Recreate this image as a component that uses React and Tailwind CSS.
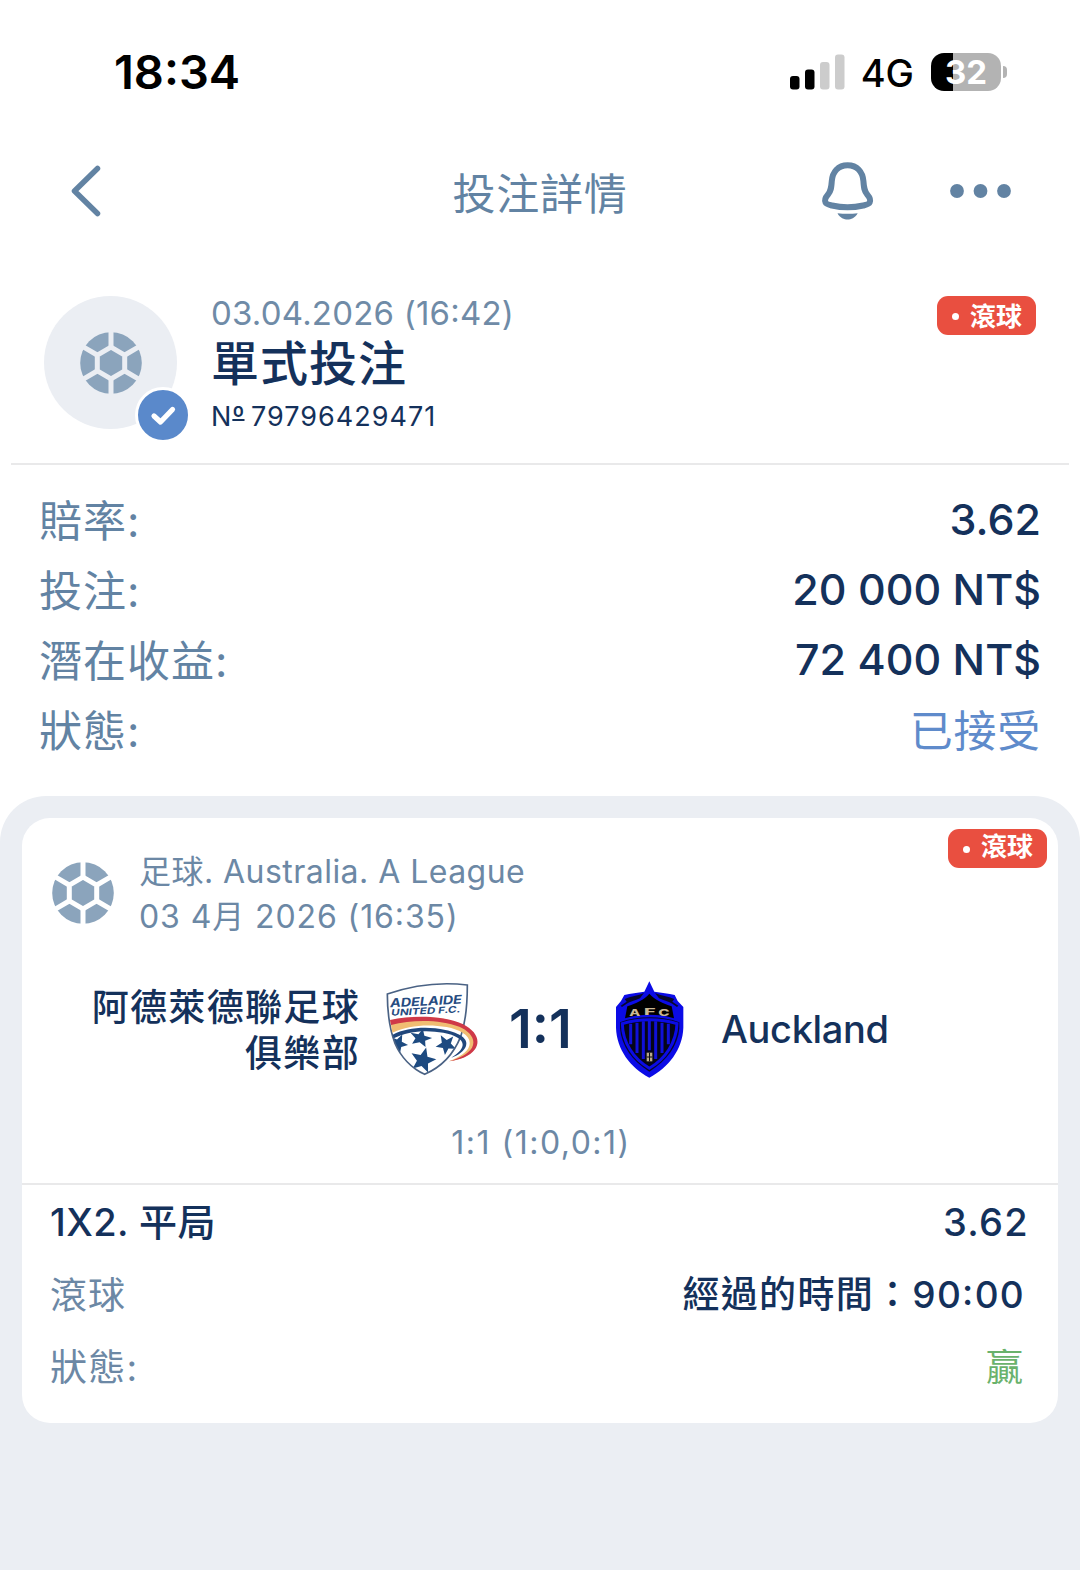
const BallIcon = ({ gap }) => (
  <svg width="62" height="62" viewBox="0 0 62 62" className="shrink-0">
    <circle cx="31" cy="31" r="30.8" fill="#8ba4bc" />
    <g fill="none" stroke={gap} strokeWidth="5">
      <path d="M31 15.2 44.7 23.1V38.9L31 46.8 17.3 38.9V23.1Z" />
      <path d="M31 16V-1M31 46V63M44 23.5 60 14.2M44 38.5 60 47.8M18 23.5 2 14.2M18 38.5 2 47.8" />
    </g>
  </svg>
);

const BellIcon = () => (
  <svg width="56" height="62" viewBox="0 0 56 62" fill="none">
    <path
      d="M27.6 5.2C18 5.2 12.5 12 11.8 21C11.3 28 11 31 8 34.5C5 38 4.5 40.5 5.5 42.5C6.5 44.5 9 44.8 12 45.5C22 47.8 33 47.8 43.2 45.5C46.2 44.8 48.7 44.5 49.7 42.5C50.7 40.5 50.2 38 47.2 34.5C44.2 31 43.9 28 43.4 21C42.7 12 37.2 5.2 27.6 5.2Z"
      stroke="#6283a3"
      strokeWidth="6"
    />
    <path d="M17.5 53.2Q27.6 54.4 37.7 53.2C35 58 31 59.500 27.6 59.500S20 58 17.5 53.2Z" fill="#6283a3" />
  </svg>
);

const SHIELD = 'M22 57C95 32 180 20 262 30C262 90 256 145 242 185C220 240 180 278 134 298C95 280 62 245 45 205C28 160 22 110 22 57Z';
const STAR = 'M0-30 8-10 29-9 13 5 18 25 0 14-18 25-13 5-29-9-8-10Z';

const AdelaideLogo = () => (
  <svg width="110" height="110" viewBox="0 0 330 330" className="mt-1 shrink-0">
    <defs>
      <clipPath id="adelaide">
        <path d={SHIELD} />
      </clipPath>
    </defs>
    <path d={SHIELD} fill="#fff" />
    <g clipPath="url(#adelaide)" fill="#1d4a80">
      <path d={STAR} transform="translate(54 206) rotate(25)" />
      <path d={STAR} transform="translate(122 189) rotate(14) scale(1.15 .92)" />
      <path d={STAR} transform="translate(198 208) rotate(-30) scale(1.05)" />
      <path d={STAR} transform="translate(129 255) rotate(14) scale(1.32 1.3)" />
    </g>
    <path d={SHIELD} fill="none" stroke="#4a6284" strokeWidth="5" />
    <path d="M31 137C100 120 190 122 246 149C285 168 301 196 283 222C268 243 240 254 207 259C238 246 262 232 268 212C276 184 242 164 200 156C140 146 85 152 37 173Z" fill="#f0bd72" />
    <path d="M30 135C100 120 190 121 248 147C290 168 302 198 285 223C269 244 240 255 207 259C240 249 264 237 276 218C289 193 270 169 238 155C182 134 100 132 33 150Z" fill="#cf3948" />
    <path d="M38 179C80 158 140 153 196 165C240 174 266 192 258 213C252 229 234 242 214 248C230 237 246 226 248 210C249 193 226 180 190 173C138 164 83 168 41 190Z" fill="#20477c" />
    <g fill="#264b80" fontFamily="Inter, sans-serif" fontStyle="italic" fontWeight="700" transform="rotate(-3 140 100)">
      <text x="31" y="91" fontSize="36" textLength="216" lengthAdjust="spacingAndGlyphs">ADELAIDE</text>
      <text x="33" y="117" fontSize="27" textLength="208" lengthAdjust="spacingAndGlyphs">UNITED F.C.</text>
    </g>
  </svg>
);

const AucklandLogo = () => (
  <svg width="100" height="115" viewBox="0 0 300 345" className="shrink-0">
    <path d="M148 31 163 62C185 66 205 66 224 72L233 90 250 108V170C248 235 205 290 148 320C91 290 50 235 48 170V108L63 90 73 72C92 66 112 66 133 62Z" fill="#0b0be6" />
    <path d="M74 84C92 76 115 74 132 66L120 82C105 88 90 92 80 98L66 108 62 104 80 92ZM223 84C205 76 182 74 165 66L177 82C192 88 207 92 217 98L231 108 235 104 217 92Z" fill="#07072c" />
    <path d="M82 106C108 96 132 88 148 68C165 88 189 96 215 106L222 142C178 128 120 128 75 142Z" fill="#000" />
    <path d="M60 154C110 134 186 134 238 154V172C234 224 200 270 148 302C96 270 64 224 60 172Z" fill="#07072c" />
    <path d="M67 158C115 142 183 142 231 158C229 214 198 262 148 292C99 262 68 214 67 158Z" fill="#050518" stroke="#0b0be6" strokeWidth="9" />
    <path d="M92 158V220M111 155V246M130 151V264M148 150V238M167 151V264M186 155V246M205 158V220" stroke="#1010d8" strokeWidth="9" />
    <path d="M140 245H157V271H140Z" fill="#b9a98b" />
    <path d="M140 258H157M148.500 245V271" stroke="#111" strokeWidth="3" />
    <g fontFamily="Inter, sans-serif" fontSize="27" fontWeight="800" fill="#cbb894">
      <text x="88" y="136" textLength="33" lengthAdjust="spacingAndGlyphs">A</text>
      <text x="132" y="133" textLength="35" lengthAdjust="spacingAndGlyphs">F</text>
      <text x="175" y="136" textLength="34" lengthAdjust="spacingAndGlyphs">C</text>
    </g>
  </svg>
);

const LiveBadge = ({ labelClass }) => (
  <span className="flex h-[39px] w-[99px] items-center rounded-[11px] bg-[#e94f40] pl-[15px] text-[26px] leading-[36px] font-bold text-white">
    <span className="mt-px mr-[11px] size-[7px] rounded-full bg-white" />
    <span className={labelClass}>滾球</span>
  </span>
);

// clock colon, centred on the digits
const Colon = () => <span className="inline-block -translate-y-[0.085em]">:</span>;

const summary = [
  { label: '賠率:', value: '3.62' },
  { label: '投注:', value: '20 000 NT$' },
  { label: '潛在收益:', value: '72 400 NT$' },
];

const StatusBar = () => (
  <div className="flex h-36 items-center pr-[73px] pl-[114px] text-black">
    <span className="-mt-px text-[47px] leading-none font-semibold">18<Colon />34</span>
    <div className="ml-auto flex items-center">
      <svg width="55" height="36" viewBox="0 0 55 36">
        <rect x="0" y="22" width="9.500" height="13.500" rx="3" />
        <rect x="15" y="15.500" width="9.500" height="20" rx="3" />
        <rect x="30" y="8" width="9.500" height="27.500" rx="3" fill="#cccccc" />
        <rect x="45" y="0.500" width="9.500" height="35" rx="3" fill="#cccccc" />
      </svg>
      <span className="mt-px ml-4 text-[38px] leading-none font-medium">4G</span>
      <div className="ml-[17px] flex h-[38px] w-[70px] items-center justify-center overflow-hidden rounded-[13px] bg-[linear-gradient(90deg,#000_22px,#b3b3b3_22px)] text-[33px] leading-none font-bold text-white">
        32
      </div>
      <span className="ml-[2px] h-[12px] w-[4px] rounded-r-full bg-[#b3b3b3]" />
    </div>
  </div>
);

const NavBar = () => (
  <div className="grid h-[94px] grid-cols-[1fr_auto_1fr] items-center pr-[67px] pl-[70px] text-[#6283a3]">
    <svg width="32" height="52" viewBox="0 0 32 52" fill="none" stroke="currentColor" strokeWidth="5.500" strokeLinecap="round" strokeLinejoin="round">
      <path d="M27.500 3.500 4.500 26 27.500 48.500" />
    </svg>
    <h1 className="-ml-[3px] pt-[6px] text-[43px] leading-none tracking-[0.8px]">投注詳情</h1>
    <div className="flex items-center justify-end gap-[72px]">
      <BellIcon />
      <svg width="65" height="16" viewBox="0 0 65 16" fill="currentColor">
        <circle cx="9" cy="8" r="6.900" />
        <circle cx="32.500" cy="8" r="6.900" />
        <circle cx="56" cy="8" r="6.900" />
      </svg>
    </div>
  </div>
);

const BetHeader = () => (
  <div className="mx-[11px] flex h-[227px] border-b-2 border-[#e9e9ea] px-[33px] pt-[51px]">
    <div className="relative mt-[7px] flex size-[133px] items-center justify-center rounded-full bg-[#ebeef3]">
      <BallIcon gap="#ebeef3" />
      <div className="absolute top-[91px] left-[91px] flex size-14 items-center justify-center rounded-full border-[3px] border-white bg-[#5a89cb]">
        <svg width="50" height="50" viewBox="0 0 50 50" fill="none" stroke="#fff" strokeWidth="5.200" strokeLinecap="round" strokeLinejoin="round">
          <path d="M16 26 22.500 32 34.500 19.500" />
        </svg>
      </div>
    </div>
    <div className="ml-[34px] flex flex-col">
      <span className="text-[33px] leading-[48px] tracking-[0.2px] text-[#6f8ba7]">03.04.2026 (16<Colon />42)</span>
      <span className="text-[48px] leading-[54px] font-medium tracking-[1px] text-[#14315b]">單式投注</span>
      <span className="text-[27px] leading-[52px] tracking-[1px] text-[#14315b] [word-spacing:-2px]">
        N<span className="tracking-normal underline decoration-2 underline-offset-[-7px] [text-decoration-skip-ink:none]">º</span> 79796429471
      </span>
    </div>
    <div className="mt-[7px] ml-auto">
      <LiveBadge labelClass="pt-[3px]" />
    </div>
  </div>
);

const MatchCard = () => (
  <div className="relative h-[605px] rounded-[28px] bg-white text-[#14315b]">
    <div className="absolute top-[11px] right-[11px]">
      <LiveBadge labelClass="pb-[3px]" />
    </div>
    <div className="flex h-[120px] items-center pt-[30px] pl-[30px] text-[#6c88a5]">
      <BallIcon gap="#ffffff" />
      <div className="ml-[25px] pt-[2px] text-[32px] leading-[45px]">
        <p className="tracking-[0.46px]">足球. Australia. A League</p>
        <p className="tracking-[0.9px]">03 4月 2026 (16<Colon />35)</p>
      </div>
    </div>
    <div className="flex h-[180px] items-center">
      <p className="mr-5 w-[338px] shrink-0 pt-[5px] pl-[60px] text-right text-[37px] leading-[46px] font-medium tracking-[1.33px]">
        阿德萊德聯足球俱樂部
      </p>
      <AdelaideLogo />
      <span className="mt-[2px] ml-[19px] w-[91px] text-[54px] leading-none font-semibold">1<Colon />1</span>
      <AucklandLogo />
      <span className="mt-[2px] ml-[21px] text-[38px] leading-none font-medium tracking-[-0.35px]">Auckland</span>
    </div>
    <p className="h-[67px] border-b-2 border-[#e9e9ea] pt-px pl-[2px] text-center text-[32px] leading-[47px] tracking-[1.5px] text-[#6c88a5]">
      1:1 (1:0,0:1)
    </p>
    <div className="pt-px pl-7 text-[37px] leading-[72.5px]">
      <div className="flex justify-between pr-[29px] text-[38px] font-medium">
        <span className="tracking-[0.4px]">1X2. 平局</span>
        <span className="tracking-[1.3px]">3.62</span>
      </div>
      <div className="flex justify-between pr-[33px]">
        <span className="mt-px tracking-[1px] text-[#6c88a5]">滾球</span>
        <span className="font-medium tracking-[1.3px]">經過的時間：90<Colon />00</span>
      </div>
      <div className="flex justify-between pr-[35px]">
        <span className="tracking-[1.25px] text-[#6c88a5]">狀態:</span>
        <span className="text-[#6ab26c]">贏</span>
      </div>
    </div>
  </div>
);

export default function App() {
  return (
    <div lang="zh-Hant" className="flex min-h-[1570px] w-[1080px] flex-col overflow-hidden bg-white font-[Inter,'Noto_Sans_CJK_TC',sans-serif]">
      <StatusBar />
      <NavBar />
      <BetHeader />
      <div className="h-[331px] px-[39px] pt-[19px] text-[43px] leading-[70px]">
        {summary.map((row) => (
          <div key={row.label} className="flex justify-between">
            <span className="-mb-[2px] pt-[2px] tracking-[1px] text-[#6283a3]">{row.label}</span>
            <span className="font-medium text-[#14315b]">{row.value}</span>
          </div>
        ))}
        <div className="flex justify-between pt-[2px]">
          <span className="tracking-[1px] text-[#6283a3]">狀態:</span>
          <span className="tracking-[0.75px] text-[#5f8bcb]">已接受</span>
        </div>
      </div>
      <div className="flex-1 rounded-t-[46px] bg-[#ebeef3] px-[22px] pt-[22px]">
        <MatchCard />
      </div>
    </div>
  );
}
